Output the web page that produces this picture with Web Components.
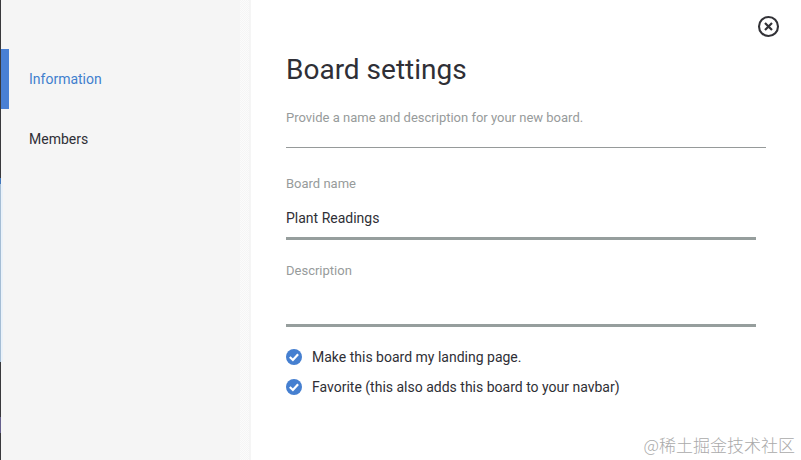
<!DOCTYPE html>
<html lang="en">
<head>
<meta charset="utf-8">
<title>Board settings</title>
<style>
  body { margin: 0; min-height: 100vh; display: grid; background: #fff; color: #2f2f36; font: 14px/20px Roboto, "Noto Sans CJK SC", sans-serif; }
</style>
</head>
<body>
<board-dialog>
  <side-nav slot="nav">
    <nav-item current>Information</nav-item>
    <nav-item>Members</nav-item>
  </side-nav>
  <close-button slot="close"></close-button>
  <panel-header>
    <span slot="title">Board settings</span>
    Provide a name and description for your new board.
  </panel-header>
  <text-field label="Board name" value="Plant Readings"></text-field>
  <text-field label="Description"></text-field>
  <check-option>Make this board my landing page.</check-option>
  <check-option>Favorite (this also adds this board to your navbar)</check-option>
  <water-mark slot="mark">@稀土掘金技术社区</water-mark>
</board-dialog>
<script>
function element(name, markup, setup) {
  const template = document.createElement('template');
  template.innerHTML = markup;
  customElements.define(name, class extends HTMLElement {
    constructor() {
      super();
      this.attachShadow({ mode: 'open' }).append(template.content.cloneNode(true));
    }
    connectedCallback() { if (setup) setup(this, this.shadowRoot); }
  });
}

element('board-dialog', `
  <style>
    :host { display: grid; grid-template-columns: 251px minmax(0, 1fr); position: relative; min-height: 100vh; }
    main { padding: 52px 35px 20px; }
    .close { position: absolute; top: 15px; right: 21px; }
    .mark { position: absolute; right: 6px; bottom: 3px; }
  </style>
  <slot name="nav"></slot>
  <main><slot></slot></main>
  <div class="close"><slot name="close"></slot></div>
  <div class="mark"><slot name="mark"></slot></div>`);

element('side-nav', `
  <style>
    :host { display: grid; grid-template-columns: 1px 2px minmax(0, 1fr) 9px 2px; background: #f5f5f5; }
    .edge { background: linear-gradient(#39393c 178px, #4178be 178px 184px, #a5bdd4 184px 362px, #39393c 362px 417px, #65608c 417px 433px, #39393c 433px); }
    .glow { background: linear-gradient(transparent 184px, #eaf2fa 184px 362px, transparent 362px); }
    .fade { background: repeating-conic-gradient(#fcfcfc 0 25%, #f5f5f5 0 50%) 0 0 / 2px 2px; }
    nav { padding-top: 49px; margin-left: -2px; }
  </style>
  <div class="edge"></div><div class="glow"></div>
  <nav aria-label="Settings"><slot></slot></nav>
  <div class="fade"></div>`);

element('nav-item', `
  <style>
    :host { display: block; }
    a { display: flex; align-items: center; height: 60px; padding-left: 20px; border-left: 8px solid transparent; color: inherit; text-decoration: none; }
    :host([current]) a { border-color: #4a80d4; color: #417fce; }
  </style>
  <a href="#"><slot></slot></a>`, (host, root) => {
    if (host.hasAttribute('current')) root.querySelector('a').setAttribute('aria-current', 'page');
  });

element('close-button', `
  <style>
    :host { display: block; }
    button { display: block; padding: 0; border: 0; background: none; color: #323237; cursor: pointer; }
    svg { display: block; }
  </style>
  <button type="button" aria-label="Close">
    <svg width="23" height="23" viewBox="0 0 23 23" fill="none" stroke="currentColor">
      <circle cx="11.5" cy="11.5" r="9.5" stroke-width="2.1"/>
      <path d="M8 8l7 7M15 8l-7 7" stroke-width="2.2"/>
    </svg>
  </button>`);

element('panel-header', `
  <style>
    :host { display: block; padding-bottom: 19px; margin-bottom: 20px; border-bottom: 1px solid #969a9a; }
    h1 { margin: 0 0 20px; font-size: 28px; line-height: 36px; font-weight: 400; }
    p { margin: 0; color: #979b9b; font-size: 13px; }
  </style>
  <h1><slot name="title"></slot></h1>
  <p><slot></slot></p>`);

element('text-field', `
  <style>
    :host { display: block; padding-top: 6px; margin: 0 10px 15px 0; }
    label { display: block; color: #979b9b; font-size: 13px; }
    input { display: block; box-sizing: border-box; width: 100%; height: 46px; padding: 4px 0 0; border: 0; border-bottom: 3px solid #969e9d; border-radius: 0; background: none; color: inherit; font: inherit; outline: 0; }
  </style>
  <label for="field"></label>
  <input id="field" type="text">`, (host, root) => {
    root.querySelector('label').textContent = host.getAttribute('label');
    root.querySelector('input').value = host.getAttribute('value') || '';
  });

element('check-option', `
  <style>
    :host { display: block; }
    label { display: grid; grid-template-columns: 16px 1fr; column-gap: 10px; align-items: center; height: 30px; }
    input, svg { grid-area: 1 / 1; width: 16px; height: 16px; margin: 0; }
    input { appearance: none; border-radius: 50%; background: #457fd0; }
    svg { pointer-events: none; visibility: hidden; }
    input:checked + svg { visibility: visible; }
  </style>
  <label>
    <input type="checkbox" checked>
    <svg viewBox="0 0 16 16" fill="none" stroke="#fff" stroke-width="2.2" aria-hidden="true"><path d="M3.8 8l3.1 3 5.2-5.7"/></svg>
    <span><slot></slot></span>
  </label>`);

element('water-mark', `
  <style>
    :host { display: block; color: #aaa; font: 17px/24px "Noto Sans CJK SC", sans-serif; font-weight: 300; }
  </style>
  <slot></slot>`);
</script>
</body>
</html>
